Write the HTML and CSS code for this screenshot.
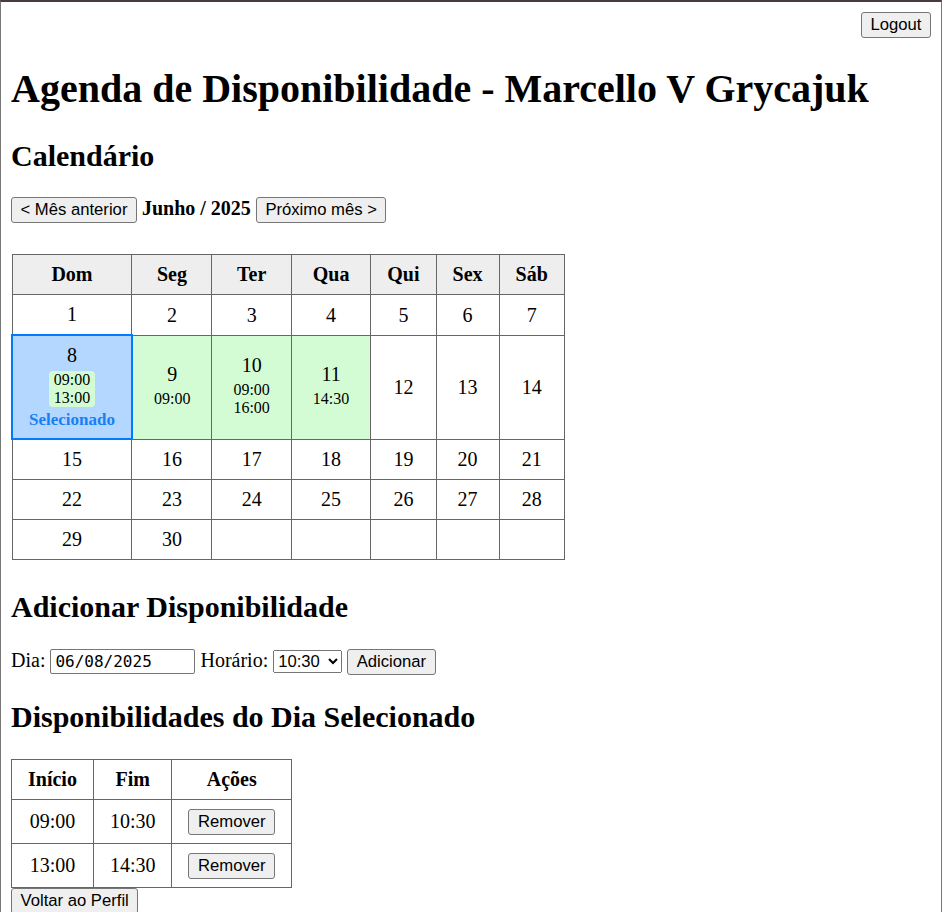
FILE: index.html
```html
<!DOCTYPE html>
<html lang="pt-BR">
<head>
<meta charset="utf-8">
<title>Agenda de Disponibilidade</title>
<link rel="stylesheet" href="styles.css">
</head>
<body>
<div class="topbar"><button class="btn">Logout</button></div>
<h1 class="title">Agenda de Disponibilidade - Marcello V Grycajuk</h1>
<h2 class="section">Calendário</h2>
<div class="month-nav"><button class="btn">&lt; Mês anterior</button> <strong>Junho / 2025</strong> <button class="btn">Próximo mês &gt;</button></div>
<table class="calendar">
  <thead>
    <tr><th>Dom</th><th>Seg</th><th>Ter</th><th>Qua</th><th>Qui</th><th>Sex</th><th>Sáb</th></tr>
  </thead>
  <tbody>
    <tr><td>1</td><td>2</td><td>3</td><td>4</td><td>5</td><td>6</td><td>7</td></tr>
    <tr>
      <td class="has-slots selected"><div class="day">8</div><div class="slots"><div>09:00</div><div>13:00</div></div><div class="sel-label">Selecionado</div></td>
      <td class="has-slots"><div class="day">9</div><div class="slots"><div>09:00</div></div></td>
      <td class="has-slots"><div class="day">10</div><div class="slots"><div>09:00</div><div>16:00</div></div></td>
      <td class="has-slots"><div class="day">11</div><div class="slots"><div>14:30</div></div></td>
      <td>12</td><td>13</td><td>14</td>
    </tr>
    <tr><td>15</td><td>16</td><td>17</td><td>18</td><td>19</td><td>20</td><td>21</td></tr>
    <tr><td>22</td><td>23</td><td>24</td><td>25</td><td>26</td><td>27</td><td>28</td></tr>
    <tr><td>29</td><td>30</td><td></td><td></td><td></td><td></td><td></td></tr>
  </tbody>
</table>
<h2 class="section">Adicionar Disponibilidade</h2>
<form class="add-form">
  <label>Dia: <input class="date-input" type="text" value="06/08/2025"></label>
  <label>Horário: <select class="time-select"><option>09:00</option><option>09:30</option><option>10:00</option><option selected>10:30</option><option>11:00</option></select></label>
  <button type="button" class="btn">Adicionar</button>
</form>
<h2 class="section">Disponibilidades do Dia Selecionado</h2>
<table class="slots-table">
  <thead><tr><th>Início</th><th>Fim</th><th>Ações</th></tr></thead>
  <tbody>
    <tr><td>09:00</td><td>10:30</td><td><button class="btn">Remover</button></td></tr>
    <tr><td>13:00</td><td>14:30</td><td><button class="btn">Remover</button></td></tr>
  </tbody>
</table>
<button class="btn">Voltar ao Perfil</button>
</body>
</html>
```

FILE: styles.css
```css
html { background: #fff; }
body {
  margin: 0;
  min-height: 100vh;
  box-sizing: border-box;
  padding: 10px;
  border-top: 2px solid #4a3a3f;
  border-left: 1px solid #777;
  border-right: 1px solid #777;
  font-family: "Liberation Serif", "Times New Roman", serif;
  font-size: 20px;
  color: #000;
}
.btn {
  font-family: "Liberation Sans", Arial, sans-serif;
  font-size: 16.67px;
  line-height: 19px;
  color: #000;
  background: #efefef;
  border: 1px solid #767676;
  border-radius: 3px;
  padding: 2px 8.5px 3px;
  margin: 0;
}
.topbar { display: flex; justify-content: flex-end; }
.title { font-size: 40px; margin: 26.8px 0; }
.section { font-size: 30px; margin: 24.9px 0; }
.month-nav { margin: 20px 0; }
.calendar, .slots-table { border-collapse: collapse; }
.calendar { margin: 31px 0 30px; }
.calendar th, .calendar td,
.slots-table th, .slots-table td {
  border: 1px solid #666;
  padding: 8px 16px;
  text-align: center;
}
.slots-table td { padding: 8.5px 16px; }
.calendar th { background: #eee; }
.calendar td.has-slots { background: #d4fcd4; }
.calendar td.selected { background: #b3d7ff; border: 2px solid #007bff; }
.slots {
  width: fit-content;
  margin: 3.5px auto;
  padding: 0 5px;
  background: #d4fcd4;
  border-radius: 4px;
  font-size: 16px;
}
.sel-label { font-size: 17px; font-weight: bold; color: #1a7ff5; }
.add-form { margin: 20px 0; }
.date-input {
  font-family: "DejaVu Sans Mono", monospace;
  font-size: 16px;
  padding: 1px 4px;
  border: 1px solid #767676;
  border-radius: 2px;
  height: 25px;
  box-sizing: border-box;
  width: 145px;
}
.time-select {
  font-family: "Liberation Sans", Arial, sans-serif;
  font-size: 16.67px;
  width: 69px;
  height: 23px;
}
```
